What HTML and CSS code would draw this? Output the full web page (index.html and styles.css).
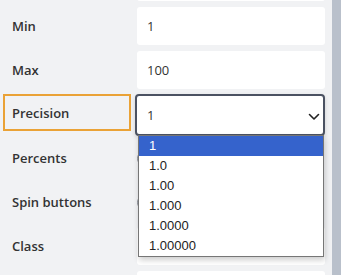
FILE: index.html
```html
<!DOCTYPE html>
<html>
<head>
<meta charset="utf-8">
<link rel="stylesheet" href="styles.css">
</head>
<body>
<div class="page">
  <div class="main">
    <div class="form">
      <div class="row first"><div class="label"></div><div class="field input"></div></div>
      <div class="row"><div class="label">Min</div><div class="field input">1</div></div>
      <div class="row"><div class="label">Max</div><div class="field input">100</div></div>
      <div class="row"><div class="label focused">Precision</div>
        <div class="field select">1
          <svg class="chev" width="12" height="8" viewBox="0 0 12 8"><path d="M1.5 1.5 L6 6 L10.5 1.5" fill="none" stroke="#222" stroke-width="1.6" stroke-linecap="round" stroke-linejoin="round"/></svg>
          <ul class="dropdown">
            <li class="sel">1</li>
            <li>1.0</li>
            <li>1.00</li>
            <li>1.000</li>
            <li>1.0000</li>
            <li>1.00000</li>
          </ul>
        </div>
      </div>
      <div class="row"><div class="label">Percents</div><div class="field"><span class="toggle"></span></div></div>
      <div class="row"><div class="label">Spin buttons</div><div class="field"><span class="toggle"></span></div></div>
      <div class="row"><div class="label">Class</div><div class="field input"></div></div>
      <div class="row"><div class="label"></div><div class="field input"></div></div>
    </div>
  </div>
  <div class="scrollbar"></div>
</div>
</body>
</html>
```

FILE: styles.css
```css
html, body {
  margin: 0;
  padding: 0;
}
body {
  background: #f1f2f4;
  font-family: "Open Sans", "Segoe UI", sans-serif;
  color: #333;
  width: 341px;
  height: 275px;
  overflow: hidden;
}
.page {
  display: flex;
  height: 275px;
}
.main {
  width: 332px;
  overflow: hidden;
}
.scrollbar {
  width: 9px;
  background: #b9c0cb;
}
.form {
  display: flex;
  flex-direction: column;
  gap: 6px;
  padding-left: 3px;
}
.row {
  display: grid;
  grid-template-columns: 128px 188px;
  column-gap: 6px;
  height: 38px;
}
.row.first {
  margin-top: -37px;
}
.label {
  display: flex;
  align-items: center;
  padding-left: 9px;
  font-size: 13px;
  font-weight: 600;
  color: #333;
}
.label.focused {
  border: 2px solid #eaa236;
  padding-left: 7px;
  height: 37px;
  box-sizing: border-box;
  margin-top: -1px;
}
.field {
  position: relative;
  display: flex;
  align-items: center;
  font-size: 13px;
  color: #333;
}
.input {
  background: #fff;
  border-radius: 3px;
  padding-left: 10px;
}
.select {
  background: #fff;
  border: 2px solid #4b5262;
  border-radius: 4px;
  margin: -1px 0 -3px -2px;
  padding-left: 10px;
  box-shadow: 0 2px 4px rgba(0,0,0,0.15);
  width: 190px;
  box-sizing: border-box;
}
.chev {
  position: absolute;
  right: 3px;
  top: 17px;
}
.toggle {
  display: block;
  width: 28px;
  height: 15px;
  border: 1.5px solid #8a8f98;
  border-radius: 9px;
  margin-left: 0;
  box-sizing: border-box;
}
.dropdown {
  position: absolute;
  left: 1px;
  top: 39px;
  width: 186px;
  box-sizing: border-box;
  margin: 0;
  padding: 0;
  list-style: none;
  background: #fff;
  border: 1px solid #767676;
  box-shadow: 1px 3px 6px rgba(0,0,0,0.2);
  font-family: "Liberation Sans", Arial, sans-serif;
  font-size: 13px;
  color: #222;
  z-index: 5;
}
.dropdown li {
  height: 20px;
  line-height: 20px;
  padding-left: 10px;
}
.dropdown li.sel {
  background: #3563cc;
  color: #fff;
}
```
